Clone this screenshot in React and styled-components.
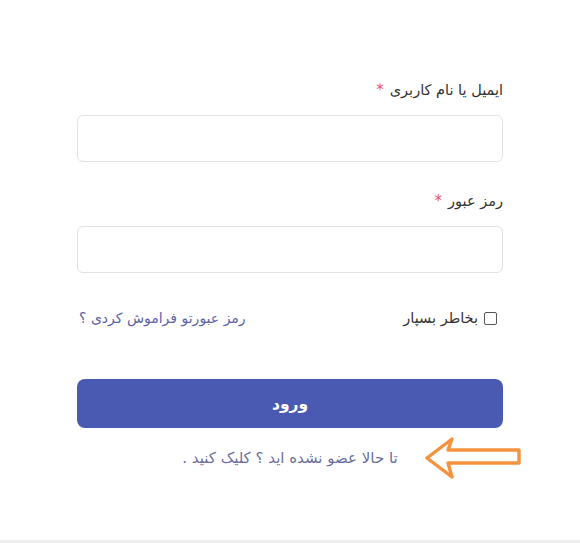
import React from "react";
import styled, { createGlobalStyle } from "styled-components";

const Global = createGlobalStyle`
  html, body { margin: 0; padding: 0; background: #ececec; }
  body { font-family: "DejaVu Sans", "Noto Sans", sans-serif; }
  * { box-sizing: border-box; }
`;

const Card = styled.div`
  background: #fff;
  height: 540px;
  box-shadow: 0 1px 2px rgba(0,0,0,0.06);
  direction: rtl;
  padding-top: 78px;
`;

const Form = styled.form`
  width: 426px;
  margin: 0 auto;
  display: flex;
  flex-direction: column;
`;

const Label = styled.label`
  font-size: 14.5px;
  line-height: 24px;
  color: #333;
  margin-top: ${(p) => p.$mt || 0}px;
  display: flex;
  gap: 6px;
`;

const Star = styled.span`
  color: #e8556f;
  font-size: 15px;
`;

const Input = styled.input`
  margin-top: 13px;
  height: 47px;
  width: 100%;
  border: 1px solid #e3e3e3;
  border-radius: 6px;
  background: #fff;
  outline: none;
`;

const Row = styled.div`
  margin-top: 33px;
  height: 24px;
  display: flex;
  align-items: center;
  justify-content: space-between;
  padding: 0 6px 0 2px;
`;

const Remember = styled.label`
  display: flex;
  align-items: center;
  gap: 6px;
  font-size: 14.5px;
  color: #333;
`;

const Check = styled.span`
  width: 13px;
  height: 13px;
  border: 1px solid #555;
  border-radius: 2px;
  display: inline-block;
`;

const Forgot = styled.a`
  font-size: 14px;
  color: #5b63a6;
  text-decoration: none;
`;

const Button = styled.button`
  margin-top: 49px;
  height: 49px;
  border: none;
  border-radius: 8px;
  background: #4a5ab3;
  color: #fff;
  font-family: inherit;
  font-weight: bold;
  font-size: 15.5px;
`;

const Bottom = styled.div`
  position: relative;
  margin-top: 18px;
  height: 24px;
  display: flex;
  justify-content: center;
  align-items: center;
`;

const SignUp = styled.a`
  font-size: 15px;
  color: #6a6e9e;
  text-decoration: none;
`;

const Arrow = styled.svg`
  position: absolute;
  left: 345px;
  top: -11px;
`;

export default function App() {
  return (
    <>
      <Global />
      <Card>
        <Form>
          <Label>ایمیل یا نام کاربری<Star>*</Star></Label>
          <Input />
          <Label $mt={27}>رمز عبور<Star>*</Star></Label>
          <Input type="password" />
          <Row>
            <Remember><Check />بخاطر بسپار</Remember>
            <Forgot href="#">رمز عبورتو فراموش کردی ؟</Forgot>
          </Row>
          <Button type="button">ورود</Button>
          <Bottom>
            <SignUp href="#">تا حالا عضو نشده اید ؟ کلیک کنید .</SignUp>
            <Arrow width="100" height="46" viewBox="0 0 100 46">
              <path
                d="M5 23 L30 4 L26 15 L97 15 L97 28 L26 28 L30 42 Z"
                fill="none"
                stroke="#f5923e"
                strokeWidth="3.4"
                strokeLinejoin="round"
              />
            </Arrow>
          </Bottom>
        </Form>
      </Card>
    </>
  );
}
